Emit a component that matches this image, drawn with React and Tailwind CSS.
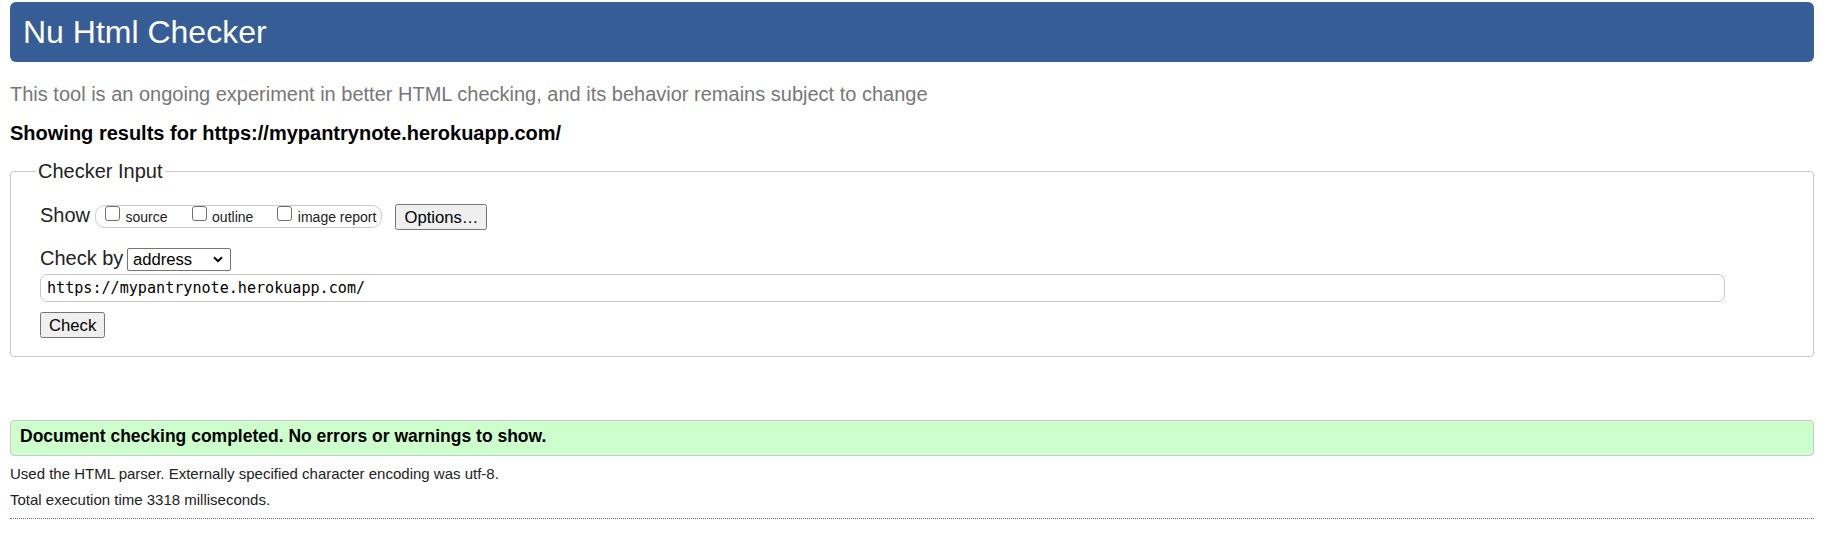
const ShowOption = ({ label }) => (
  <label className="flex items-start gap-[5.5px]">
    <input
      type="checkbox"
      className="appearance-none w-[15px] h-[15px] border border-[#6f6f6f] rounded-[3px] bg-white m-0"
    />
    <span className="mt-[3px] text-[14px] leading-[16px] text-[#222]">{label}</span>
  </label>
);

const App = () => {
  return (
    <div className="min-h-[552px] bg-white pl-[10px] pr-[19px] pt-[2px] font-['Liberation_Sans',Arial,sans-serif] text-[#222]">
      <h1 className="bg-[#365d95] text-white text-[32px] leading-[38px] font-normal px-[13px] py-[11px] rounded-[6px]">
        Nu Html Checker
      </h1>

      <p className="mt-[21px] text-[20px] leading-[23px] text-[#777]">
        This tool is an ongoing experiment in better HTML checking, and its behavior remains subject to change
      </p>

      <p className="mt-[16px] text-[20px] leading-[23px] font-bold text-black">
        Showing results for https://mypantrynote.herokuapp.com/
      </p>

      <fieldset className="mt-[15px] border border-[#c8c8c8] rounded-[4px] pl-[29px] pr-[88px] pt-[21px] pb-[18px]">
        <legend className="ml-[-4px] px-[2px] text-[20px] leading-[23px] text-[#222]">Checker Input</legend>

        {/* Show row */}
        <div className="flex items-start h-[26px]">
          <span className="text-[20px] leading-[23px]">Show</span>
          <div className="ml-[5px] mt-[1px] h-[23px] border border-[#cccccc] rounded-[10px] pl-[9px] pr-[5px] flex items-start gap-[24px]">
            <ShowOption label="source" />
            <ShowOption label="outline" />
            <ShowOption label="image report" />
          </div>
          <button className="ml-[13px] h-[26px] px-[8px] bg-[#efefef] border border-[#767676] rounded-[2.5px] text-[16.67px] leading-[19px] text-black">
            Options…
          </button>
        </div>

        {/* Check by row */}
        <div className="mt-[17px] flex items-start">
          <span className="text-[20px] leading-[23px]">Check by</span>
          <div className="relative ml-[3.5px] mt-[1px]">
            <select className="appearance-none w-[104px] h-[23px] border border-[#767676] rounded-[2px] bg-white pl-[5px] text-[16.67px] leading-[19px] text-black">
              <option>address</option>
            </select>
            <svg className="absolute right-[8px] top-[8px] w-[10px] h-[7px] pointer-events-none" viewBox="0 0 10 7" fill="none">
              <path d="M1 1.2 L5 5.2 L9 1.2" stroke="#000" strokeWidth="2" />
            </svg>
          </div>
        </div>

        <input
          type="text"
          defaultValue="https://mypantrynote.herokuapp.com/"
          className="mt-[2px] block w-full h-[28px] border border-[#c8c8c8] rounded-[7px] pl-[6px] font-['DejaVu_Sans_Mono',monospace] text-[15.1px] text-black outline-none"
        />

        <button className="mt-[10px] block h-[26px] px-[8px] bg-[#efefef] border border-[#767676] rounded-[2.5px] text-[16.67px] leading-[19px] text-black">
          Check
        </button>
      </fieldset>

      <div className="mt-[63px] border border-[#c8c8c8] rounded-[4px] bg-[#ccffcc] pl-[9px] pt-[5px] pb-[9px]">
        <p className="text-[17.5px] leading-[20px] font-bold text-black">
          Document checking completed. No errors or warnings to show.
        </p>
      </div>

      <p className="mt-[9px] text-[15px] leading-[17px] text-[#222]">
        Used the HTML parser. Externally specified character encoding was utf-8.
      </p>
      <p className="mt-[9px] text-[15px] leading-[17px] text-[#222]">
        Total execution time 3318 milliseconds.
      </p>
      <div className="mt-[10px] border-t border-dotted border-[#777]"></div>
    </div>
  );
};

export default App;
